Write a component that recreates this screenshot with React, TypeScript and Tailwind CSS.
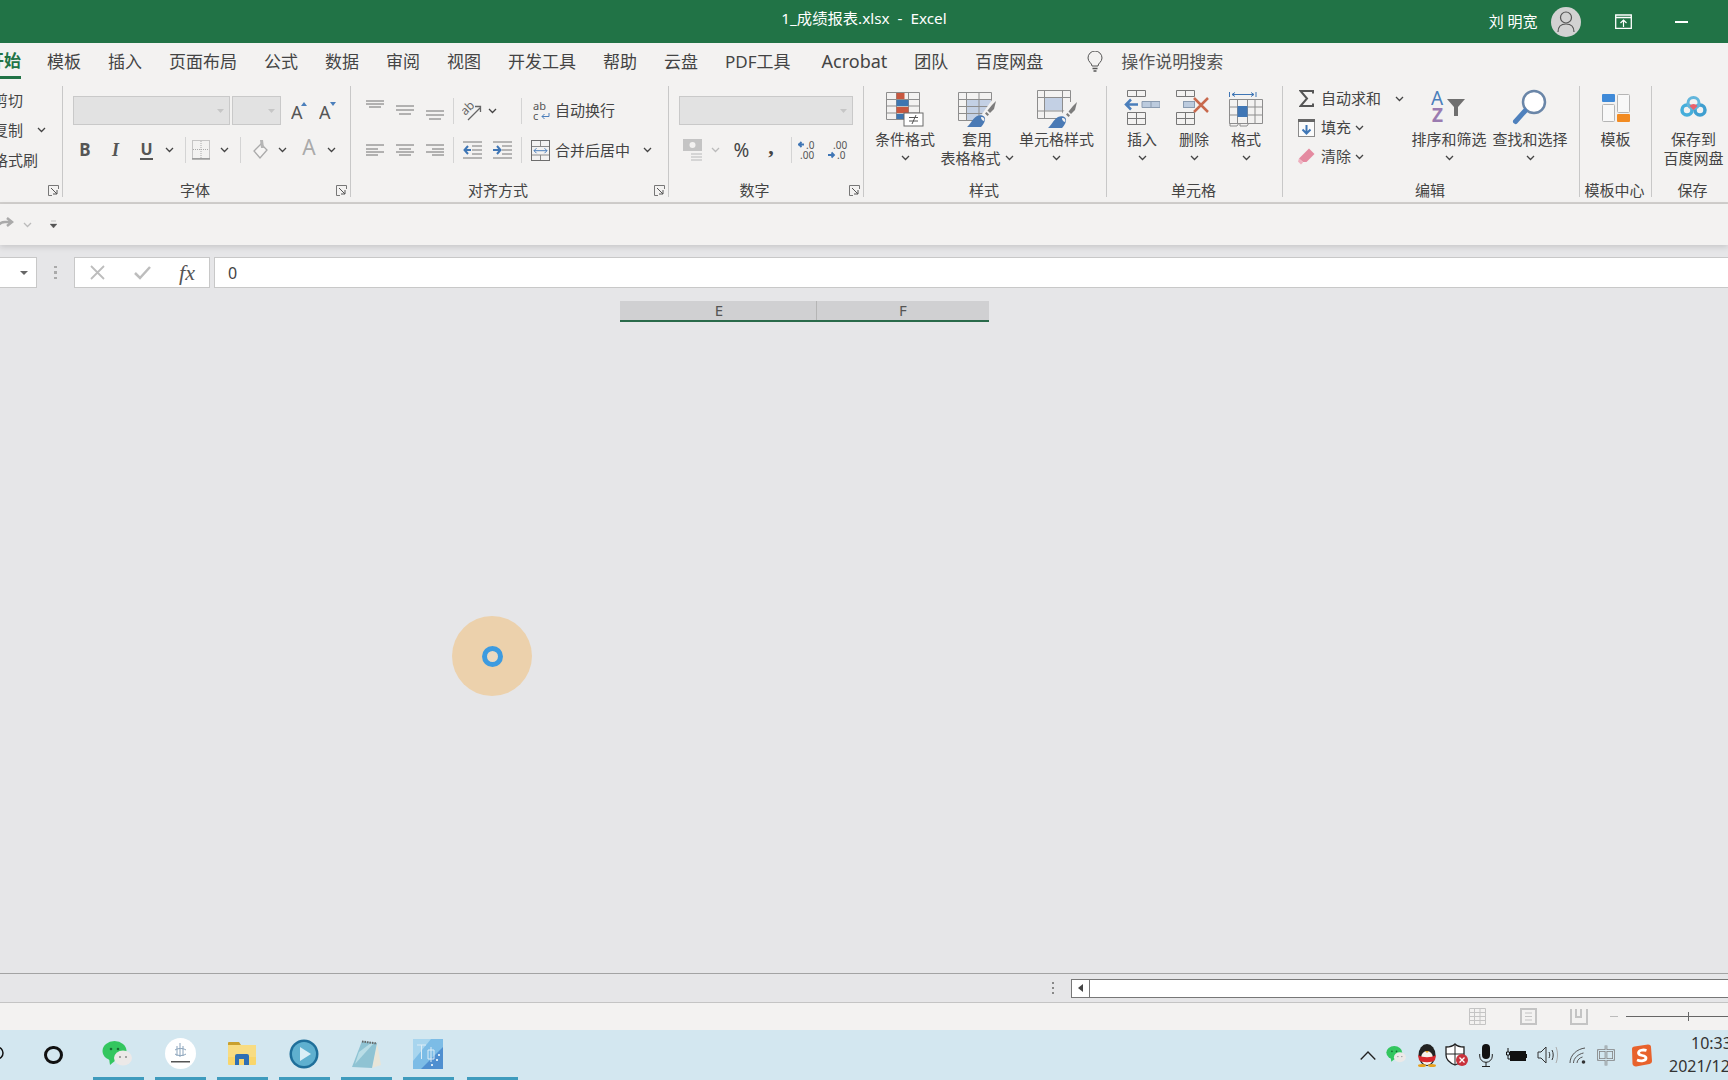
import type { ReactNode } from 'react';
import clsx from 'clsx';

const Chev = ({ color = '#444' }: { color?: string }) => (
  <svg width="9" height="6" viewBox="0 0 9 6" className="shrink-0">
    <polyline points="1,1 4.5,4.5 8,1" fill="none" stroke={color} strokeWidth="1.3" />
  </svg>
);

const Slot = ({ className, children }: { className?: string; children?: ReactNode }) => (
  <div className={clsx('flex h-full shrink-0 items-center justify-center', className)}>{children}</div>
);

const Sep = ({ className }: { className?: string }) => (
  <Slot className={clsx('w-[6px]', className)}>
    <div className="h-[26px] w-px bg-[#d4d4d4]" />
  </Slot>
);

const Launcher = () => (
  <svg width="11" height="11" viewBox="0 0 11 11">
    <path d="M10.5 4V.5H.5v10H4" fill="none" stroke="#777" />
    <path d="M3 3l6 6M9 5v4H5" fill="none" stroke="#555" />
  </svg>
);

function Group({
  label,
  launcher,
  className,
  children,
}: {
  label: string;
  launcher?: boolean;
  className?: string;
  children?: ReactNode;
}) {
  return (
    <div className={clsx('flex h-[111px] shrink-0 flex-col border-r border-[#c8c8c8]', className)}>
      {children}
      <div className="mt-auto -mb-[2px] flex h-[18px] items-center">
        <span className="flex-1 pr-[2px] text-center leading-[18px] whitespace-nowrap">{label}</span>
        {launcher && (
          <div className="flex w-[21px] justify-end pr-[3px]">
            <Launcher />
          </div>
        )}
      </div>
    </div>
  );
}

function BigButton({
  icon,
  line1,
  line2,
  chev = true,
  className,
}: {
  icon: ReactNode;
  line1: string;
  line2?: string;
  chev?: boolean;
  className?: string;
}) {
  return (
    <div className={clsx('flex shrink-0 flex-col items-center', className)}>
      <div className="flex h-[44px] items-end justify-center">{icon}</div>
      <div className="h-[18px] leading-[18px] whitespace-nowrap">{line1}</div>
      <div className="mt-[1px] flex h-[18px] items-center justify-center gap-[4px] leading-[18px] whitespace-nowrap">
        {line2}
        {chev && <Chev />}
      </div>
    </div>
  );
}

const Select = ({ className }: { className?: string }) => (
  <div className={clsx('flex h-[29px] shrink-0 items-center justify-end border border-[#c9c9c9] bg-[#e2e2e2] pr-[5px]', className)}>
    <svg width="7" height="4" viewBox="0 0 7 4">
      <path d="M0 0h7L3.5 4z" fill="#c6c6c6" />
    </svg>
  </div>
);

const FontSize = ({ up }: { up?: boolean }) => (
  <svg width="18" height="20" viewBox="0 0 18 20">
    <text x="0" y="18" fontSize="18" fill="#555" fontFamily="Noto Sans">A</text>
    <path d={up ? 'M10 5l3-4 3 4z' : 'M11 1h6l-3 4z'} fill="#4a7ebb" />
  </svg>
);

const BordersIcon = () => (
  <svg width="18" height="20" viewBox="0 0 18 20">
    <rect x=".5" y=".5" width="17" height="18" fill="none" stroke="#999" strokeDasharray="1 1" />
    <path d="M9 1v18M1 9.5h16" stroke="#aaa" strokeDasharray="1 1" />
    <path d="M0 19h18" stroke="#777" />
  </svg>
);

const FillIcon = () => (
  <svg width="18" height="22" viewBox="0 0 18 22">
    <path d="M9 5L2 12l6 7 7-8z" fill="#f6f5f4" stroke="#aaa" strokeWidth="1.3" />
    <path d="M8 1h3l1 8H9z" fill="#b5b5b5" />
  </svg>
);

const AlignLines = ({ lines, w = 18, h = 29 }: { lines: [number, number, number][]; w?: number; h?: number }) => (
  <svg width={w} height={h} viewBox={`0 0 ${w} ${h}`}>
    {lines.map(([a, b, y]) => (
      <line key={y} x1={a} x2={b} y1={y} y2={y} stroke="#707070" />
    ))}
  </svg>
);

const OrientIcon = () => (
  <svg width="20" height="20" viewBox="0 0 20 20">
    <text x="-1" y="11" fontSize="12" fill="#666" transform="rotate(-45 6 8)" fontFamily="Noto Sans">ab</text>
    <path d="M6 19L18 7M13 5.500h5.500V11" fill="none" stroke="#666" strokeWidth="1.3" />
  </svg>
);

const IndentIcon = ({ flip }: { flip?: boolean }) => (
  <svg width="19" height="18" viewBox="0 0 19 18">
    <path d="M0 1h19M9 5h10M9 9h10M9 13h10M0 17h19" stroke="#777" />
    {flip ? (
      <path d="M0 9h7M4 5l3.500 4L4 13" fill="none" stroke="#3f76b5" strokeWidth="2" />
    ) : (
      <path d="M1 9h7M5 5L1.500 9 5 13" fill="none" stroke="#3f76b5" strokeWidth="2" />
    )}
  </svg>
);

const WrapIcon = () => (
  <svg width="17" height="20" viewBox="0 0 17 20">
    <text x="0" y="9" fontSize="11" fill="#555" fontFamily="Noto Sans">ab</text>
    <text x="0" y="19" fontSize="11" fill="#555" fontFamily="Noto Sans">c</text>
    <path d="M16 12v3.500H9M11.500 13L9 15.500l2.500 2.500" fill="none" stroke="#4a7ebb" />
  </svg>
);

const MergeIcon = () => (
  <svg width="19" height="21" viewBox="0 0 19 21">
    <rect x=".5" y=".5" width="18" height="20" fill="none" stroke="#6d6d6d" />
    <path d="M1 6.500h17M1 15h17M9.500 1v5M9.500 15v5" stroke="#8a8a8a" />
    <path d="M3 10.700h13M5.500 8.200L3 10.700l2.500 2.500M13.500 8.200l2.500 2.500-2.500 2.500" fill="none" stroke="#4a7ebb" />
  </svg>
);

const CurrencyIcon = () => (
  <svg width="20" height="22" viewBox="0 0 20 22">
    <rect width="19" height="12" fill="#c4c4c4" />
    <circle cx="9.500" cy="6" r="3" fill="#f3f2f1" />
    <path d="M8 14h11v2H8zm0 3h11v2H8zm0 3h11v2H8z" fill="#d5d5d5" />
  </svg>
);

const DecimalIcon = ({ more }: { more?: boolean }) => (
  <svg width="24" height="20" viewBox="0 0 24 20">
    <path d={more ? 'M0 4.500h6M3.500 2L1 4.500 3.500 7' : 'M0 15h6M3.500 12.500L6 15l-2.500 2.500'} fill="none" stroke="#3f76b5" strokeWidth="1.8" />
    <text x={more ? 8 : 5} y="9" fontSize="10" fill="#555" fontFamily="Noto Sans">{more ? '.0' : '.00'}</text>
    <text x={more ? 2 : 9} y="19" fontSize="10" fill="#555" fontFamily="Noto Sans">{more ? '.00' : '.0'}</text>
  </svg>
);

const Brush = ({ dx, dy }: { dx: number; dy: number }) => (
  <g transform={`translate(${dx} ${dy})`}>
    <path d="M9 0L7 8l-4 4-2.500-2.500L5 4z" fill="#7c7c7c" />
    <path d="M-.500 11l2.500 2.500-1.500 1.500L-2 12.500z" fill="#7c7c7c" />
    <path d="M-20 26c3-2 5-8 10-11 4-2 9 0 8 4-.5 3-3 6-4 7z" fill="#4a7ab5" />
    <path d="M-6 16c3 0 4 2 3 4-2-.5-3-2-3-4z" fill="#f3f2f1" />
  </g>
);

const CondIcon = () => (
  <svg width="38" height="35" viewBox="0 0 38 35" className="mb-[3px]">
    <path d="M.5.500h33v27H.500zM.5 7.500h33M.5 14h33M.5 21h33M10.500 0v27M22.500 0v27" fill="none" stroke="#8d8d8d" />
    <rect x="10.500" y="1" width="8" height="6" fill="#c9583f" />
    <rect x="10.500" y="8" width="12" height="6" fill="#3f76b0" />
    <rect x="10.500" y="15" width="12" height="6" fill="#c9583f" />
    <rect x="10.500" y="22" width="8" height="5" fill="#3f76b0" />
    <rect x="18" y="21" width="19" height="13" fill="#fff" stroke="#6b6b6b" />
    <path d="M23 25.500h9M23 29h9M30 23l-4 9" fill="none" stroke="#555" />
  </svg>
);

const TableIcon = () => (
  <svg width="38" height="36" viewBox="0 0 38 36" className="mb-[2px]">
    <rect x="8.500" y="7" width="25" height="21" fill="#c3d0e4" />
    <path d="M.5.500h33v28H.500zM.5 7.500h33M.5 14.500h33M.5 21.500h33M8.500 0v28M21 0v28" fill="none" stroke="#8d8d8d" />
    <path d="M34 8L14 36h24V8z" fill="#f3f2f1" />
    <Brush dx={29} dy={9} />
  </svg>
);

const CellStyleIcon = () => (
  <svg width="40" height="38" viewBox="0 0 40 38" className="mb-[2px]">
    <rect x="7.500" y="7.500" width="18" height="13" fill="#c3d0e4" />
    <path d="M.5.500h33v28H.500zM.5 7.500h33M.5 21h33M7.500 0v28M25.500 0v28" fill="none" stroke="#8d8d8d" />
    <path d="M33 12L15 38h25V12z" fill="#f3f2f1" />
    <Brush dx={31} dy={12} />
  </svg>
);

const InsertIcon = () => (
  <svg width="36" height="35" viewBox="0 0 36 35" className="mb-[5px]">
    <path d="M3.500.500h18v6h-18zM12.500 0v6M3.500 22.500h18v12h-18zM3.500 28.500h18M12.500 22v12" fill="none" stroke="#777" />
    <path d="M18 11.500h18v6H18z" fill="#bccbde" stroke="#8a9bb0" />
    <path d="M27 11.500v6" stroke="#8a9bb0" />
    <path d="M14 14.500H2M7 9.500l-5 5 5 5" fill="none" stroke="#4a7ebb" strokeWidth="2.500" />
  </svg>
);

const DeleteIcon = () => (
  <svg width="36" height="35" viewBox="0 0 36 35" className="mb-[5px]">
    <path d="M.5.500h18v6H.500zM9.500 0v6M.5 22.500h18v12H.500zM.5 28.500h18M9.500 22v12" fill="none" stroke="#777" />
    <rect x="7.500" y="11.500" width="11" height="6" fill="#bccbde" stroke="#8a9bb0" />
    <path d="M18 8l14 14M32 8L18 22" stroke="#c8694d" strokeWidth="2.500" />
  </svg>
);

const FormatIcon = () => (
  <svg width="34" height="35" viewBox="0 0 34 35" className="mb-[3px]">
    <path d="M.5 0v5M27 0v5M3 2.500h22M6 .5L3 2.500l3 2M22 .5l3 2-3 2" fill="none" stroke="#3f76b5" />
    <path d="M.5 7.500h33v24H.500zM.5 15h33M.5 23h33M8.500 7v24M18.500 7v24M26 7v24" fill="none" stroke="#8d8d8d" />
    <rect x="8.500" y="14" width="10" height="11" fill="#3f76b5" />
    <path d="M1 31v3h7l2-3M11 31v3h7l2-3" fill="none" stroke="#8d8d8d" />
  </svg>
);

const SumIcon = () => (
  <svg width="15" height="17" viewBox="0 0 15 17">
    <path d="M14 3.500V1H1.500l6.500 7.500L1.500 16H14v-2.500" fill="none" stroke="#555" strokeWidth="2" />
  </svg>
);

const FillDownIcon = () => (
  <svg width="17" height="18" viewBox="0 0 17 18">
    <rect x=".5" y=".5" width="16" height="17" fill="#fbfbfb" stroke="#8a8a8a" />
    <rect width="17" height="3" fill="#666" />
    <path d="M8.500 6v9M4.500 10.500l4 4 4-4" fill="none" stroke="#3f76b5" strokeWidth="2" />
  </svg>
);

const EraserIcon = () => (
  <svg width="17" height="17" viewBox="0 0 17 17">
    <path d="M11 .5l5.500 5.500-8 8H5L1 10.500z" fill="#e48aa0" />
    <path d="M1 10.500L5 14.500l-2 2-3-3z" fill="#eeb0bf" />
  </svg>
);

const SortIcon = () => (
  <svg width="36" height="33" viewBox="0 0 36 33" className="mb-[7px]">
    <text x="0" y="15" fontSize="19" fill="#4a7ebb" fontFamily="Noto Sans">A</text>
    <text x="1" y="32" fontSize="19" fill="#9a7bb0" fontFamily="Noto Sans" fontWeight="700">Z</text>
    <path d="M16 9h18l-7 8v9h-4v-9z" fill="#6f6f6f" />
  </svg>
);

const FindIcon = () => (
  <svg width="36" height="36" viewBox="0 0 36 36" className="mb-[5px]">
    <circle cx="22" cy="13" r="11" fill="#fff" stroke="#6a86a8" strokeWidth="2.500" />
    <path d="M13 22L3.500 32.500" stroke="#4f81bd" strokeWidth="5" strokeLinecap="round" />
  </svg>
);

const TemplateIcon = () => (
  <svg width="28" height="28" viewBox="0 0 28 28" className="mb-[8px]">
    <rect width="13" height="8" rx="1" fill="#3f8ad8" />
    <rect x="15.500" y=".5" width="12" height="18" rx="1" fill="#f8f8f8" stroke="#b5b5b5" />
    <rect x=".5" y="10.500" width="12" height="17" rx="1" fill="#f8f8f8" stroke="#b5b5b5" />
    <rect x="15" y="20" width="13" height="8" rx="1" fill="#f28b22" />
  </svg>
);

const BaiduIcon = () => (
  <svg width="27" height="23" viewBox="0 0 27 23" className="mb-[12px]">
    <circle cx="7" cy="15" r="5" fill="none" stroke="#45aedb" strokeWidth="3.500" />
    <circle cx="20" cy="15" r="5" fill="none" stroke="#3f9fd0" strokeWidth="3.500" />
    <circle cx="13.500" cy="8" r="5.500" fill="none" stroke="#62b6dc" strokeWidth="3" />
    <path d="M13.500 15l-4-4a5 5 0 0 1 8 0z" fill="#e8616b" />
  </svg>
);

const WeChat = ({ s = 1 }: { s?: number }) => (
  <svg width={30 * s} height={26 * s} viewBox="0 0 30 26">
    <ellipse cx="12.500" cy="10" rx="12" ry="10" fill="#33c65f" />
    <path d="M7 17l1 7 6-5z" fill="#33c65f" />
    <circle cx="9" cy="8" r="1.300" fill="#176b33" />
    <circle cx="16" cy="8" r="1.300" fill="#176b33" />
    <ellipse cx="21" cy="17" rx="9" ry="7.500" fill="#ece9e8" />
    <circle cx="18" cy="16" r="1" fill="#8a8a8a" />
    <circle cx="24" cy="16" r="1" fill="#8a8a8a" />
  </svg>
);

const LogoRound = () => (
  <svg width="31" height="31" viewBox="0 0 31 31">
    <circle cx="15.500" cy="15.500" r="15.500" fill="#fff" />
    <path d="M12 8v10M15 5v14M18 8v10M10 12c3-2 8-2 11 0M10 16c3 2 8 2 11 0" fill="none" stroke="#8aa3bb" />
    <rect x="6" y="23" width="19" height="1.500" fill="#555" />
  </svg>
);

const FolderIcon = () => (
  <svg width="28" height="27" viewBox="0 0 28 27">
    <path d="M0 3a1 1 0 0 1 1-1h10l2 3H0z" fill="#c9a02e" />
    <rect y="5" width="28" height="20" rx="1" fill="#f9d66b" />
    <path d="M0 5h28v12H0z" fill="#f8dc82" />
    <path d="M7 25v-9a2 2 0 0 1 2-2h10a2 2 0 0 1 2 2v9h-5v-6h-5v6z" fill="#2f6fb4" />
  </svg>
);

const PlayerIcon = () => (
  <svg width="30" height="30" viewBox="0 0 30 30">
    <circle cx="15" cy="15" r="14.500" fill="#1f6f9a" />
    <circle cx="15" cy="15" r="12" fill="#5fb0cf" />
    <path d="M11 8l11 7-11 7z" fill="#d9eef6" />
  </svg>
);

const NotepadIcon = () => (
  <svg width="29" height="28" viewBox="0 0 29 28">
    <path d="M25 3l4 22-9 3z" fill="#e8e5d8" />
    <path d="M10 1l15 2-5 25L0 27z" fill="#8fc3d3" />
    <path d="M7 12l12-9 2 1L3 24z" fill="#b9dde6" />
    <path d="M10 1.500l15 2" stroke="#666" strokeWidth="2" strokeDasharray="1.500 1" />
  </svg>
);

const BlueTile = () => (
  <svg width="30" height="30" viewBox="0 0 30 30">
    <rect width="30" height="30" fill="#7cbce6" />
    <path d="M0 0h18L0 22z" fill="#a8d5ee" />
    <path d="M30 8v22H8z" fill="#4f8fd0" />
    <path d="M4 6h9M8.500 6v14M15 11h6v9h-6zM18 8v15" fill="none" stroke="#dcecf6" />
    <path d="M25 15h2v2h-2zM23 20h2v2h-2zM18 25h2v2h-2z" fill="#d7e8f5" />
  </svg>
);

const QQIcon = () => (
  <svg width="20" height="24" viewBox="0 0 20 24">
    <ellipse cx="10" cy="12" rx="8.500" ry="11" fill="#222" />
    <ellipse cx="10" cy="15" rx="6" ry="7" fill="#f6f1ea" />
    <path d="M1 12c5 3 13 3 18 0l-1 5c-2 3-14 3-16 0z" fill="#d8282d" />
    <ellipse cx="5" cy="22.500" rx="4" ry="1.500" fill="#e8a21f" />
    <ellipse cx="15" cy="22.500" rx="4" ry="1.500" fill="#e8a21f" />
    <path d="M8 8h4l-2 2z" fill="#e8a21f" />
  </svg>
);

const ShieldIcon = () => (
  <svg width="24" height="24" viewBox="0 0 24 24">
    <path d="M10 1c2 2 6 3 9 3v8c0 5-4 8-9 10-5-2-9-5-9-10V4c3 0 7-1 9-3z" fill="#fff" stroke="#222" strokeWidth="1.300" />
    <path d="M10 1v21M1 11h18" stroke="#222" />
    <circle cx="17" cy="17" r="6" fill="#c9323c" />
    <path d="M14.500 14.500l5 5M19.500 14.500l-5 5" stroke="#fff" strokeWidth="1.300" />
  </svg>
);

const MicIcon = () => (
  <svg width="14" height="23" viewBox="0 0 14 23">
    <rect x="3" width="8" height="15" rx="4" fill="#111" />
    <path d="M.7 10v2a6.300 6.300 0 0 0 12.600 0v-2M7 18v4M3 22.500h8" fill="none" stroke="#222" />
  </svg>
);

const BatteryIcon = () => (
  <svg width="22" height="14" viewBox="0 0 22 14">
    <rect x="5.500" y="3.500" width="15" height="9" fill="#111" stroke="#111" />
    <rect x="21" y="6" width="1" height="4" fill="#111" />
    <path d="M3 0v4M1.500 4h3v3h-3zM3 7v4h3" fill="none" stroke="#111" />
  </svg>
);

const VolumeIcon = () => (
  <svg width="21" height="20" viewBox="0 0 21 20">
    <path d="M1 7h3l5-5v16l-5-5H1z" fill="none" stroke="#333" />
    <path d="M12 7c1 2 1 4 0 6M15 5c1.600 3 1.600 7 0 10" fill="none" stroke="#333" />
    <path d="M19 2c2 5 2 11 0 16" fill="none" stroke="#aaa" />
  </svg>
);

const WifiIcon = () => (
  <svg width="18" height="17" viewBox="0 0 18 17">
    <path d="M1 16C1 8 8 2 16 1M4.500 16c0-5 5-9 10-10M8 16c0-3 3-5.500 5.500-6" fill="none" stroke="#555" />
    <circle cx="14.500" cy="15" r="1.800" fill="#333" />
  </svg>
);

const SogouIcon = () => (
  <svg width="21" height="23" viewBox="0 0 21 23">
    <path d="M3.500 2.500L17 .5c2 0 3 1 3 2.500l1 14c0 1.500-1 2.500-2.500 3L5 22.500c-2 0-3-1-3.500-2.500L1 5c0-1.500 1-2.500 2.500-2.500z" fill="#e8622c" />
    <path d="M15.500 6.500c-3-1-8-.5-8 2.500 0 3.500 7.500 1.500 7.500 5 0 3-5 3.500-9 2" fill="none" stroke="#fff" strokeWidth="2.800" />
  </svg>
);

const Tile = ({ children, className }: { children?: ReactNode; className?: string }) => (
  <div className="flex h-full w-[51px] shrink-0 flex-col">
    <div className={clsx('flex flex-1 items-center justify-center', className)}>{children}</div>
    <div className="h-[3px] bg-[#3f9bbd]" />
  </div>
);

export default function App() {
  const tabs = ['模板', '插入', '页面布局', '公式', '数据', '审阅', '视图', '开发工具', '帮助', '云盘', 'PDF工具', 'Acrobat', '团队', '百度网盘'];

  return (
    <div className="flex h-screen w-[1728px] flex-col overflow-hidden bg-[#e6e6e8] text-[15px] text-[#444] [font-family:'Noto_Sans','Noto_Sans_CJK_SC',sans-serif]">
      {/* title bar */}
      <div className="grid h-[43px] shrink-0 grid-cols-[minmax(0,1fr)_auto_minmax(0,1fr)] items-center bg-[#217346] text-white">
        <div />
        <div className="-mt-[6px] text-[15.3px] whitespace-pre">1_成绩报表.xlsx  -  Excel</div>
        <div className="flex items-center">
          <span className="ml-[542px] whitespace-nowrap text-[15px]">刘 明宽</span>
          <div className="ml-[13px] flex size-[30px] shrink-0 items-center justify-center rounded-full bg-[#d2d2d2]">
            <svg width="18" height="22" viewBox="0 0 18 22">
              <circle cx="9" cy="6.500" r="5.500" fill="none" stroke="#555" strokeWidth="1.200" />
              <path d="M1 21c0-5 3-8 8-8s8 3 8 8" fill="none" stroke="#555" strokeWidth="1.200" />
            </svg>
          </div>
          <svg width="17" height="15" viewBox="0 0 17 15" className="ml-[34px] shrink-0">
            <path d="M.7 3.500h15.600v10.800H.7zM.7 1h15.600v2.500H.7z" fill="none" stroke="#fff" strokeWidth="1.300" />
            <path d="M8.500 13V6M5.500 9l3-3 3 3" fill="none" stroke="#fff" strokeWidth="1.200" />
          </svg>
          <div className="ml-[43px] h-[2px] w-[13px] shrink-0 bg-white" />
        </div>
      </div>

      {/* tabs */}
      <div className="flex h-[37px] shrink-0 items-center gap-[27px] bg-[#f3f2f1] text-[17px]">
        <div className="-mr-[1px] -ml-[13px] mb-[1px] flex items-center self-stretch border-b-[3px] border-[#217346] pt-[3px] font-bold whitespace-nowrap text-[#217346]">
          开始
        </div>
        {tabs.map((t) => (
          <span key={t} className={clsx('whitespace-nowrap', t === 'Acrobat' && 'ml-[4px] text-[18px]')}>
            {t}
          </span>
        ))}
        <div className="ml-[17px] flex items-center gap-[18px] whitespace-nowrap">
          <svg width="16" height="22" viewBox="0 0 16 22">
            <path d="M5 15c0-3-4-4-4-8a7 7 0 0 1 14 0c0 4-4 5-4 8z" fill="none" stroke="#555" />
            <path d="M5.500 17.500h5M6.500 20h3" stroke="#555" strokeWidth="1.300" />
          </svg>
          <span className="text-[#555]">操作说明搜索</span>
        </div>
      </div>

      {/* ribbon */}
      <div className="flex h-[122px] shrink-0 bg-[#f3f2f1] pt-[6px]">
        <Group label="" launcher className="w-[63px]">
          <div className="-mt-[1px] flex flex-col">
            <div className="-ml-[7px] flex h-[30px] items-center whitespace-nowrap">剪切</div>
            <div className="-ml-[7px] flex h-[30px] items-center whitespace-nowrap">
              复制
              <span className="ml-[14px]">
                <Chev />
              </span>
            </div>
            <div className="-ml-[7px] flex h-[30px] items-center whitespace-nowrap">格式刷</div>
          </div>
        </Group>

        <Group label="字体" launcher className="w-[288px]">
          <div className="mt-[10px] flex h-[29px] items-center pl-[10px]">
            <Select className="w-[157px]" />
            <Select className="ml-[2px] w-[49px]" />
            <Slot className="ml-[5px] w-[28px]">
              <FontSize up />
            </Slot>
            <Slot className="w-[28px]">
              <FontSize />
            </Slot>
          </div>
          <div className="mt-[10px] flex h-[30px] items-center pl-[8px] text-[#555]">
            <Slot className="w-[28px] text-[17px] font-bold">B</Slot>
            <Slot className="w-[33px] font-['Liberation_Serif'] text-[18px] font-bold italic">I</Slot>
            <Slot className="w-[29px] text-[16px] font-bold">
              <span className="border-b-2 border-[#555] leading-[18px]">U</span>
            </Slot>
            <Slot className="w-[16px]">
              <Chev />
            </Slot>
            <Sep className="ml-[5px] w-[5px]" />
            <Slot className="ml-[3px] w-[20px]">
              <BordersIcon />
            </Slot>
            <Slot className="w-[26px]">
              <Chev />
            </Slot>
            <Sep className="w-[4px]" />
            <Slot className="w-[35px]">
              <FillIcon />
            </Slot>
            <Slot className="w-[8px]">
              <Chev />
            </Slot>
            <Slot className="ml-[4px] w-[38px] pb-[4px] text-[21px] text-[#aaa]">A</Slot>
            <Slot className="w-[6px]">
              <Chev />
            </Slot>
          </div>
        </Group>

        <Group label="对齐方式" launcher className="w-[318px]">
          <div className="mt-[10px] flex h-[29px] items-center pl-[9px]">
            <Slot className="w-[30px]">
              <AlignLines lines={[[0, 18, 5], [0, 18, 8], [3, 15, 11]]} />
            </Slot>
            <Slot className="w-[30px]">
              <AlignLines lines={[[0, 18, 10], [0, 18, 14], [3, 15, 18]]} />
            </Slot>
            <Slot className="w-[30px]">
              <AlignLines lines={[[0, 18, 15], [0, 18, 19], [3, 15, 23]]} />
            </Slot>
            <Sep />
            <Slot className="w-[32px]">
              <OrientIcon />
            </Slot>
            <Slot className="w-[8px]">
              <Chev />
            </Slot>
            <Sep className="ml-[22px]" />
            <Slot className="ml-[6px] w-[22px]">
              <WrapIcon />
            </Slot>
            <span className="ml-[3px] whitespace-nowrap">自动换行</span>
          </div>
          <div className="mt-[10px] flex h-[30px] items-center pl-[9px]">
            <Slot className="w-[30px]">
              <AlignLines h={14} lines={[[0, 18, 2], [0, 12, 6], [0, 18, 9], [0, 12, 12]]} />
            </Slot>
            <Slot className="w-[30px]">
              <AlignLines h={14} lines={[[0, 18, 2], [3, 15, 6], [0, 18, 9], [3, 15, 12]]} />
            </Slot>
            <Slot className="w-[30px]">
              <AlignLines h={14} lines={[[0, 18, 2], [6, 18, 6], [0, 18, 9], [6, 18, 12]]} />
            </Slot>
            <Sep />
            <Slot className="w-[32px]">
              <IndentIcon />
            </Slot>
            <Slot className="w-[28px]">
              <IndentIcon flip />
            </Slot>
            <Sep className="ml-[2px]" />
            <Slot className="ml-[4px] w-[24px]">
              <MergeIcon />
            </Slot>
            <span className="ml-[3px] whitespace-nowrap">合并后居中</span>
            <Slot className="ml-[12px] w-[10px]">
              <Chev />
            </Slot>
          </div>
        </Group>

        <Group label="数字" launcher className="w-[195px]">
          <div className="mt-[10px] flex h-[29px] pl-[10px]">
            <Select className="w-[174px]" />
          </div>
          <div className="mt-[10px] flex h-[30px] items-center pl-[10px]">
            <Slot className="w-[27px]">
              <CurrencyIcon />
            </Slot>
            <Slot className="ml-[5px] w-[8px]">
              <Chev color="#bbb" />
            </Slot>
            <Slot className="w-[45px] text-[19px]">%</Slot>
            <Slot className="w-[14px] pb-[8px] font-['Liberation_Serif'] text-[22px] font-bold">,</Slot>
            <Sep className="ml-[10px] w-[5px]" />
            <Slot className="w-[32px]">
              <DecimalIcon more />
            </Slot>
            <Slot className="w-[28px]">
              <DecimalIcon />
            </Slot>
          </div>
        </Group>

        <Group label="样式" className="w-[243px]">
          <div className="flex pl-[10px]">
            <BigButton className="w-[62px]" icon={<CondIcon />} line1="条件格式" />
            <BigButton className="w-[82px]" icon={<TableIcon />} line1="套用" line2="表格格式" />
            <BigButton className="w-[77px]" icon={<CellStyleIcon />} line1="单元格样式" />
          </div>
        </Group>

        <Group label="单元格" className="w-[176px]">
          <div className="flex pl-[9px]">
            <BigButton className="w-[52px]" icon={<InsertIcon />} line1="插入" />
            <BigButton className="w-[52px]" icon={<DeleteIcon />} line1="删除" />
            <BigButton className="w-[52px]" icon={<FormatIcon />} line1="格式" />
          </div>
        </Group>

        <Group label="编辑" className="w-[297px]">
          <div className="flex">
            <div className="-mt-[2px] flex w-[127px] shrink-0 flex-col pl-[12px]">
              <div className="flex h-[29px] items-center">
                <Slot className="w-[22px]">
                  <SumIcon />
                </Slot>
                <span className="ml-[4px] whitespace-nowrap">自动求和</span>
                <span className="ml-[14px]">
                  <Chev />
                </span>
              </div>
              <div className="flex h-[29px] items-center">
                <Slot className="w-[22px]">
                  <FillDownIcon />
                </Slot>
                <span className="ml-[4px] whitespace-nowrap">填充</span>
                <span className="ml-[4px]">
                  <Chev />
                </span>
              </div>
              <div className="flex h-[29px] items-center">
                <Slot className="w-[22px]">
                  <EraserIcon />
                </Slot>
                <span className="ml-[4px] whitespace-nowrap">清除</span>
                <span className="ml-[4px]">
                  <Chev />
                </span>
              </div>
            </div>
            <BigButton className="w-[78px]" icon={<SortIcon />} line1="排序和筛选" />
            <BigButton className="ml-[3px] w-[78px]" icon={<FindIcon />} line1="查找和选择" />
          </div>
        </Group>

        <Group label="模板中心" className="w-[72px]">
          <BigButton icon={<TemplateIcon />} line1="模板" chev={false} />
        </Group>

        <Group label="保存" className="w-[76px] border-r-0 pl-[7px]">
          <BigButton icon={<BaiduIcon />} line1="保存到" line2="百度网盘" chev={false} />
        </Group>
      </div>

      <div className="h-[2px] shrink-0 bg-[#d2d0ce]" />

      {/* quick access */}
      <div className="z-10 flex h-[41px] shrink-0 items-center bg-[#f3f2f1] shadow-[0_2px_6px_rgba(0,0,0,0.14)]">
        <svg width="20" height="16" viewBox="0 0 20 16" className="-ml-[5px] shrink-0">
          <path d="M2 15c-1-6 3-10 8-10h7M12 1l5 4-5 4" fill="none" stroke="#aaa" strokeWidth="2.500" />
        </svg>
        <span className="ml-[8px]">
          <Chev color="#bbb" />
        </span>
        <svg width="7" height="9" viewBox="0 0 7 9" className="ml-[18px] shrink-0">
          <path d="M1 1h5M0 4h7L3.500 8z" fill="#555" stroke="#555" strokeWidth=".3" />
        </svg>
      </div>

      {/* sheet area */}
      <div className="relative min-h-0 flex-1">
        <div className="mt-[12px] flex h-[31px] items-stretch">
          <div className="flex w-[37px] shrink-0 items-center justify-end border border-l-0 border-[#c8c8c8] bg-white pr-[8px]">
            <svg width="8" height="4" viewBox="0 0 8 4">
              <path d="M0 0h8L4 4z" fill="#666" />
            </svg>
          </div>
          <div className="flex w-[37px] shrink-0 flex-col items-center justify-center gap-[3px]">
            <div className="size-[2.500px] bg-[#aaa]" />
            <div className="size-[2.500px] bg-[#aaa]" />
            <div className="size-[2.500px] bg-[#aaa]" />
          </div>
          <div className="flex w-[136px] shrink-0 items-center border border-[#c8c8c8] bg-white">
            <Slot className="w-[45px]">
              <svg width="15" height="15" viewBox="0 0 15 15">
                <path d="M1 1l13 13M14 1L1 14" stroke="#bdbdbd" strokeWidth="1.800" />
              </svg>
            </Slot>
            <Slot className="w-[45px]">
              <svg width="17" height="14" viewBox="0 0 17 14">
                <path d="M1 7l5 5L16 1" fill="none" stroke="#bdbdbd" strokeWidth="2.500" />
              </svg>
            </Slot>
            <Slot className="w-[44px] font-['Liberation_Serif'] text-[22px] text-[#555] italic">fx</Slot>
          </div>
          <div className="ml-[4px] flex flex-1 items-center border border-r-0 border-[#c8c8c8] bg-white pl-[13px] text-[16px] text-[#444]">
            0
          </div>
        </div>

        <div className="mt-[13px] ml-[620px] flex h-[21px] w-[369px] border-b-2 border-[#2a6a4a] bg-[#d0d0d2] text-[15px] text-[#555]">
          <div className="flex w-[197px] items-center justify-center border-r border-[#b5b5b5] pl-[2px]">E</div>
          <div className="flex flex-1 items-center justify-center">F</div>
        </div>

        {/* click highlight */}
        <div className="absolute top-[371px] left-[452px] flex size-[80px] items-center justify-center rounded-full bg-[#ecd1ac]">
          <div className="size-[21px] rounded-full border-[5px] border-[#3d9be0] bg-[#ecd9c0]" />
        </div>
      </div>

      {/* sheet tab bar + scrollbar */}
      <div className="flex h-[30px] shrink-0 items-center border-y border-t-[#a3a3a3] border-b-[#c4c4c4] pl-[1052px]">
        <div className="flex flex-col gap-[3px]">
          <div className="size-[2px] bg-[#888]" />
          <div className="size-[2px] bg-[#888]" />
          <div className="size-[2px] bg-[#888]" />
        </div>
        <div className="ml-[17px] flex h-[19px] w-[19px] shrink-0 items-center justify-center border border-[#777] bg-white">
          <svg width="5" height="8" viewBox="0 0 5 8">
            <path d="M5 0v8L0 4z" fill="#444" />
          </svg>
        </div>
        <div className="h-[19px] flex-1 border-y border-[#777] bg-white" />
      </div>

      {/* status bar */}
      <div className="flex h-[27px] shrink-0 items-center bg-[#f3f2f1] pl-[1469px]">
        <svg width="17" height="17" viewBox="0 0 17 17" className="shrink-0">
          <path d="M.5.500h16v16H.500zM.5 4.500h16M.5 8.500h16M.5 12.500h16M5.500 0v17M11 0v17" fill="none" stroke="#c4c4c4" />
        </svg>
        <svg width="17" height="17" viewBox="0 0 17 17" className="ml-[34px] shrink-0">
          <rect x="1" y="1" width="15" height="15" fill="none" stroke="#c4c4c4" strokeWidth="2" />
          <path d="M5 5h7M5 8.500h7M5 12h7" stroke="#c4c4c4" />
        </svg>
        <svg width="18" height="17" viewBox="0 0 18 17" className="ml-[33px] shrink-0">
          <path d="M1 1v15h16V1M6 1v8h5V1" fill="none" stroke="#c4c4c4" strokeWidth="2" />
        </svg>
        <div className="ml-[22px] h-px w-[8px] bg-[#bbb]" />
        <div className="relative ml-[8px] h-px flex-1 bg-[#666]">
          <div className="absolute top-[-4px] left-[62px] h-[9px] w-px bg-[#666]" />
        </div>
      </div>

      {/* taskbar */}
      <div className="flex h-[50px] shrink-0 items-center bg-[#d3e7f0] text-[#333]">
        <svg width="14" height="16" viewBox="0 0 14 16" className="-mt-[4px] -ml-[10px] shrink-0">
          <circle cx="7" cy="8" r="6" fill="none" stroke="#111" strokeWidth="1.500" />
        </svg>
        <div className="ml-[40px] h-[18px] w-[19px] shrink-0 rounded-full border-[3px] border-[#111]" />
        <div className="ml-[30px] flex h-full shrink-0 items-stretch gap-[11px]">
          <Tile className="pr-[3px]">
            <WeChat />
          </Tile>
          <Tile className="pr-[1px]">
            <LogoRound />
          </Tile>
          <Tile className="pr-[1px]">
            <FolderIcon />
          </Tile>
          <Tile className="pr-[1px]">
            <PlayerIcon />
          </Tile>
          <Tile className="pr-[1px]">
            <NotepadIcon />
          </Tile>
          <Tile className="pr-[1px]">
            <BlueTile />
          </Tile>
          <div className="ml-[2px]">
            <Tile />
          </div>
        </div>
        <div className="ml-[837px] flex h-full shrink-0 items-center">
          <Slot className="w-[25px]">
            <svg width="16" height="9" viewBox="0 0 16 9">
              <path d="M.7 8.500L8 1l7.300 7.500" fill="none" stroke="#222" strokeWidth="1.300" />
            </svg>
          </Slot>
          <Slot className="w-[32px]">
            <WeChat s={0.66} />
          </Slot>
          <Slot className="w-[29px]">
            <QQIcon />
          </Slot>
          <Slot className="w-[32px]">
            <ShieldIcon />
          </Slot>
          <Slot className="w-[26px]">
            <MicIcon />
          </Slot>
          <Slot className="w-[34px]">
            <BatteryIcon />
          </Slot>
          <Slot className="w-[28px]">
            <VolumeIcon />
          </Slot>
          <Slot className="w-[33px]">
            <WifiIcon />
          </Slot>
          <Slot className="w-[24px]">
            <svg width="18" height="21" viewBox="0 0 18 21">
              <path d="M1.500 5.500h15v9h-15zM9 .5v20" fill="none" stroke="#808080" strokeWidth="2.600" />
              <path d="M1.500 5.500h15v9h-15zM9 .5v20" fill="none" stroke="#d3e7f0" strokeWidth="1" />
            </svg>
          </Slot>
          <Slot className="w-[47px]">
            <SogouIcon />
          </Slot>
          <div className="flex h-full flex-col justify-center pl-[4px] text-[16px] whitespace-nowrap">
            <div className="ml-[22px] h-[23px] leading-[23px]">10:33</div>
            <div className="h-[23px] leading-[23px]">2021/12</div>
          </div>
        </div>
      </div>
    </div>
  );
}
